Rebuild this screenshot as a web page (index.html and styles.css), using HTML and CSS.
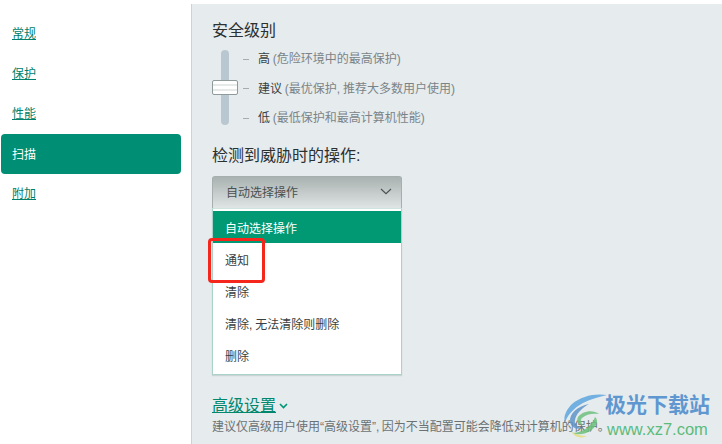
FILE: index.html
```html
<!DOCTYPE html>
<html lang="zh-CN">
<head>
<meta charset="utf-8">
<title>扫描设置</title>
<link rel="stylesheet" href="styles.css">
</head>
<body>
<div class="window">
  <nav class="sidebar">
    <a class="nav-item">常规</a>
    <a class="nav-item">保护</a>
    <a class="nav-item">性能</a>
    <a class="nav-item active">扫描</a>
    <a class="nav-item">附加</a>
  </nav>
  <main class="content">
    <h2 class="title">安全级别</h2>
    <div class="levels">
      <div class="slider"><div class="thumb"></div></div>
      <ul class="level-list">
        <li class="level"><span class="tick"></span><span class="level-name">高</span> (危险环境中的最高保护)</li>
        <li class="level"><span class="tick"></span><span class="level-name">建议</span> (最优保护, 推荐大多数用户使用)</li>
        <li class="level"><span class="tick"></span><span class="level-name">低</span> (最低保护和最高计算机性能)</li>
      </ul>
    </div>
    <h2 class="title action-title">检测到威胁时的操作:</h2>
    <div class="select">
      <span>自动选择操作</span>
      <svg class="chevron" width="12" height="7" viewBox="0 0 12 7"><path d="M1 1l5 4.6L11 1" fill="none" stroke="#4b5353" stroke-width="1.2"/></svg>
    </div>
    <ul class="menu">
      <li class="menu-item selected">自动选择操作</li>
      <li class="menu-item">通知</li>
      <li class="menu-item">清除</li>
      <li class="menu-item">清除, 无法清除则删除</li>
      <li class="menu-item">删除</li>
    </ul>
    <div class="advanced">
      <a class="advanced-link">高级设置</a>
      <svg class="advanced-chevron" width="9" height="6" viewBox="0 0 9 6"><path d="M1 1l3.5 3.5L8 1" fill="none" stroke="#009573" stroke-width="1.6"/></svg>
    </div>
    <p class="note">建议仅高级用户使用“高级设置”, 因为不当配置可能会降低对计算机的保护。</p>
  </main>
  <div class="highlight"></div>
  <div class="watermark">
    <svg class="wm-logo" width="45" height="50" viewBox="0 0 45 50">
      <path d="M44 2C32 0 18 3 9 11 3 17 0 24 2 30 4 22 11 15 20 10 28 6 36 4 44 2Z" fill="#5ea6e0"/>
      <path d="M26 11C15 13 6 20 7 29c1 5 6 8 12 6-5-1-8-4-7-8 1-6 7-12 14-16Z" fill="#5f95c9"/>
      <path d="M36 21c-6-5-17-3-21 3-2 4 0 8 5 8-2-2-3-5-1-7 4-4 11-5 17-4Z" fill="#6fc07f"/>
      <path d="M32 24c4 3 2 10-5 14-6 4-13 4-18 2 7 0 13-3 17-7 3-3 5-6 6-9Z" fill="#6cc17a"/>
      <path d="M9 39c2 5 9 7 15 4-5 0-10-1-15-4Z" fill="#e4dd7a"/>
    </svg>
    <div class="wm-text">
      <div class="wm-name">极光下载站</div>
      <div class="wm-url">www.xz7.com</div>
    </div>
  </div>
</div>
</body>
</html>
```
FILE: styles.css
```css
* { box-sizing: border-box; }
html, body { margin: 0; padding: 0; }
body {
  width: 722px;
  height: 444px;
  overflow: hidden;
  font-family: "Liberation Sans", "Noto Sans CJK SC", sans-serif;
  background: #fff;
}
ul { list-style: none; margin: 0; padding: 0; }

.window {
  position: relative;
  display: flex;
  height: 444px;
  border-top: 4px solid #fff;
  overflow: hidden;
}
.window::before {
  content: "";
  position: absolute;
  left: 0;
  right: 0;
  top: -1px;
  height: 1px;
  background: #ccd2d5;
}

.sidebar {
  flex: 0 0 192px;
  display: flex;
  flex-direction: column;
  padding: 10px 10px 0 1px;
  background: #fff;
  border-right: 1px solid #ccd2d5;
}
.nav-item {
  display: flex;
  align-items: center;
  height: 40px;
  padding-left: 11px;
  font-size: 12px;
  line-height: 16px;
  color: #00806a;
  text-decoration: underline;
  text-underline-offset: 1px;
}
.nav-item.active {
  padding-top: 2px;
  color: #fff;
  background: #008f74;
  border-radius: 4px;
  text-decoration: none;
}

.content {
  flex: 1;
  padding: 15px 0 0 20px;
  background: #e6ebee;
}
.title {
  margin: 0;
  font-size: 16px;
  font-weight: 400;
  line-height: 24px;
  color: #2b3030;
}
.levels {
  display: flex;
  margin-top: 7px;
  height: 75px;
}
.slider {
  position: relative;
  width: 8px;
  height: 75px;
  margin-left: 9px;
  background: #b9c8d0;
  border-radius: 4px;
}
.thumb {
  position: absolute;
  left: -9px;
  top: 30px;
  width: 26px;
  height: 15px;
  border: 1px solid #8f9a9a;
  border-radius: 2px;
  background: linear-gradient(#fff 0 25%, #e5e9e8 25% 40%, #fff 40% 60%, #e5e9e8 60% 75%, #fff 75%);
}
.level-list {
  display: flex;
  flex-direction: column;
  justify-content: space-between;
  margin-left: 14px;
  height: 77px;
}
.level {
  display: flex;
  align-items: center;
  font-size: 12px;
  line-height: 18px;
  word-spacing: -0.5px;
  color: #7a8488;
  white-space: pre;
}
.tick {
  width: 6px;
  height: 1px;
  margin-right: 9px;
  background: #a4aeb1;
}
.level-name { color: #3a3f40; }

.action-title { margin-top: 19px; }
.select {
  display: flex;
  align-items: center;
  justify-content: space-between;
  width: 190px;
  height: 32px;
  margin-top: 8px;
  padding: 0 9px 2px 13px;
  font-size: 12px;
  color: #4a5050;
  background: linear-gradient(#a9b2b0, #dfe4e4);
  border: 1px solid #a6afae;
  border-bottom: 0;
  border-radius: 3px 3px 0 0;
}
.menu {
  width: 190px;
  padding: 2px 0 3px;
  background: #fff;
  border: 1px solid #a9d3c8;
  border-top: 1px solid #cfe4df;
  box-shadow: 0 1px 1px rgba(90, 120, 110, 0.2);
}
.menu-item {
  display: flex;
  align-items: center;
  height: 32px;
  padding-left: 12px;
  font-size: 12px;
  word-spacing: -0.5px;
  color: #3a3f40;
}
.menu-item.selected { color: #fff; background: #009974; }

.advanced {
  display: flex;
  align-items: center;
  gap: 3px;
  margin-top: 20px;
  height: 22px;
}
.advanced-link {
  font-size: 16px;
  line-height: 20px;
  color: #00876c;
  text-decoration: underline;
  text-underline-offset: 1px;
}
.note {
  margin: 2px 0 0;
  font-size: 12px;
  line-height: 16px;
  word-spacing: -1px;
  color: #6a7274;
  white-space: nowrap;
}

.highlight {
  position: absolute;
  left: 208px;
  top: 234px;
  width: 57px;
  height: 45px;
  border: 3px solid #f5261c;
  border-radius: 4px;
}
.watermark {
  position: absolute;
  left: 563px;
  top: 389px;
  display: flex;
}
.wm-logo { flex: none; margin-right: -3px; opacity: 0.85; }
.wm-text { display: flex; flex-direction: column; margin-top: -1px; }
.wm-name {
  font-size: 21px;
  line-height: 26px;
  font-weight: 700;
  color: #5f97d0;
  white-space: nowrap;
}
.wm-url {
  margin-left: 2px;
  font-size: 16.5px;
  line-height: 22px;
  color: #5cbb7a;
  white-space: nowrap;
}
```
